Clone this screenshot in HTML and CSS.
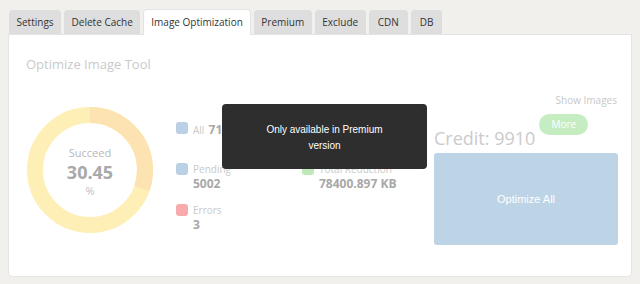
FILE: index.html
```html
<!DOCTYPE html>
<html>
<head>
<meta charset="utf-8">
<link rel="stylesheet" href="styles.css">
</head>
<body>
<div class="tabs">
  <div class="tab">Settings</div>
  <div class="tab">Delete Cache</div>
  <div class="tab active">Image Optimization</div>
  <div class="tab">Premium</div>
  <div class="tab">Exclude</div>
  <div class="tab wide">CDN</div>
  <div class="tab wide">DB</div>
</div>
<div class="panel">
  <div class="title">Optimize Image Tool</div>
  <div class="body-row">
    <div class="donut">
      <svg width="126" height="126" viewBox="0 0 126 126">
        <circle cx="63" cy="63" r="55" fill="none" stroke="#fdefb6" stroke-width="16"/>
        <circle cx="63" cy="63" r="55" fill="none" stroke="#fde3b2" stroke-width="16" stroke-dasharray="105.2 400" transform="rotate(-90 63 63)"/>
      </svg>
      <div class="donut-text">
        <div class="d-label">Succeed</div>
        <div class="d-value">30.45</div>
        <div class="d-unit">%</div>
      </div>
    </div>
    <div class="legend">
      <div class="item">
        <span class="sq blue"></span>
        <div class="txt inline"><span class="lbl">All</span> <span class="val">7193</span></div>
      </div>
      <div class="item"></div>
      <div class="item">
        <span class="sq blue"></span>
        <div class="txt"><div class="lbl">Pending</div><div class="val">5002</div></div>
      </div>
      <div class="item">
        <span class="sq green"></span>
        <div class="txt"><div class="lbl">Total Reduction</div><div class="val">78400.897 KB</div></div>
      </div>
      <div class="item">
        <span class="sq red"></span>
        <div class="txt"><div class="lbl">Errors</div><div class="val">3</div></div>
      </div>
    </div>
    <div class="right">
      <div class="show">Show Images</div>
      <div class="credit-row">
        <div class="credit">Credit: 9910</div>
        <div class="more">More</div>
      </div>
      <div class="optimize">Optimize All</div>
    </div>
  </div>
</div>
<div class="tooltip">Only available in Premium<br>version</div>
</body>
</html>
```
FILE: styles.css
```css
html, body {
  margin: 0;
  padding: 0;
}
body {
  background: #f1f0ec;
  padding: 9px 8px 7px 8px;
  font-family: "Open Sans", "Noto Sans", sans-serif;
  width: 624px;
}
.tabs {
  display: flex;
  align-items: flex-end;
  gap: 3px;
  padding-left: 1px;
  height: 25px;
}
.tab {
  background: #dedede;
  height: 24px;
  line-height: 24px;
  padding: 0 7.5px;
  font-size: 10px;
  color: #333;
  border-radius: 4px 4px 0 0;
}
.tab.wide {
  padding: 0 9px;
}
.tab.active {
  background: #fff;
  border: 1px solid #e3e3e3;
  border-bottom: none;
  margin-bottom: -1px;
  position: relative;
  z-index: 1;
  box-sizing: border-box;
  padding: 0 7px;
  height: 26px;
  line-height: 25px;
}
.panel {
  background: #fff;
  border: 1px solid #e3e3e3;
  border-radius: 0 0 4px 4px;
  height: 243px;
  box-sizing: border-box;
  padding: 20px 13px 0 17px;
}
.title {
  font-size: 13px;
  line-height: 18px;
  color: #cacaca;
}
.body-row {
  display: flex;
  margin-top: 19px;
}
.donut {
  position: relative;
  width: 126px;
  height: 126px;
  margin-top: 15px;
  margin-left: 1px;
}
.donut svg {
  display: block;
}
.donut-text {
  position: absolute;
  left: 0;
  right: 0;
  top: 39px;
  text-align: center;
}
.d-label {
  font-size: 11px;
  line-height: 14px;
  color: #b8b8b8;
}
.d-value {
  font-size: 18px;
  line-height: 24px;
  font-weight: 700;
  color: #a9a9a9;
}
.d-unit {
  font-size: 11px;
  line-height: 14px;
  color: #c0c0c0;
}
.legend {
  display: grid;
  grid-template-columns: 126px 126px;
  grid-template-rows: 41px 41px 41px;
  margin-left: 23px;
  margin-top: 30px;
}
.item {
  display: flex;
  gap: 5px;
  align-items: flex-start;
}
.sq {
  width: 12px;
  height: 12px;
  border-radius: 3px;
  flex: none;
}
.sq.blue { background: #bad0e4; }
.sq.green { background: #bfe8b8; }
.sq.red { background: #f9abab; }
.txt {
  white-space: nowrap;
}
.txt.inline {
  line-height: 12px;
}
.lbl {
  font-size: 10px;
  line-height: 12px;
  color: #c9c9c9;
}
.val {
  font-size: 12px;
  line-height: 17px;
  font-weight: 700;
  color: #a8a8a8;
}
.txt.inline .val {
  line-height: 12px;
}
.right {
  margin-left: auto;
  width: 184px;
}
.show {
  text-align: right;
  font-size: 10px;
  line-height: 16px;
  color: #c8c8c8;
  margin-right: 1px;
}
.credit-row {
  display: flex;
  align-items: flex-start;
  margin-top: 6px;
}
.credit {
  font-size: 18px;
  line-height: 24px;
  color: #cbcbcb;
  margin-top: 12px;
}
.more {
  margin-left: 4px;
  width: 49px;
  height: 21px;
  line-height: 21px;
  border-radius: 11px;
  background: #c6edc2;
  color: #fff;
  font-size: 10px;
  text-align: center;
}
.optimize {
  margin-top: 3px;
  height: 92px;
  background: #bdd3e6;
  border-radius: 3px;
  color: #fff;
  font-family: "Liberation Sans", Arial, sans-serif;
  font-size: 11px;
  display: flex;
  align-items: center;
  justify-content: center;
}
.tooltip {
  position: absolute;
  left: 222px;
  top: 104px;
  width: 205px;
  height: 65px;
  box-sizing: border-box;
  padding-top: 18px;
  background: #2e2e2e;
  border-radius: 4px;
  color: #fff;
  font-family: "Liberation Sans", Arial, sans-serif;
  font-size: 10px;
  line-height: 16px;
  text-align: center;
}
```
